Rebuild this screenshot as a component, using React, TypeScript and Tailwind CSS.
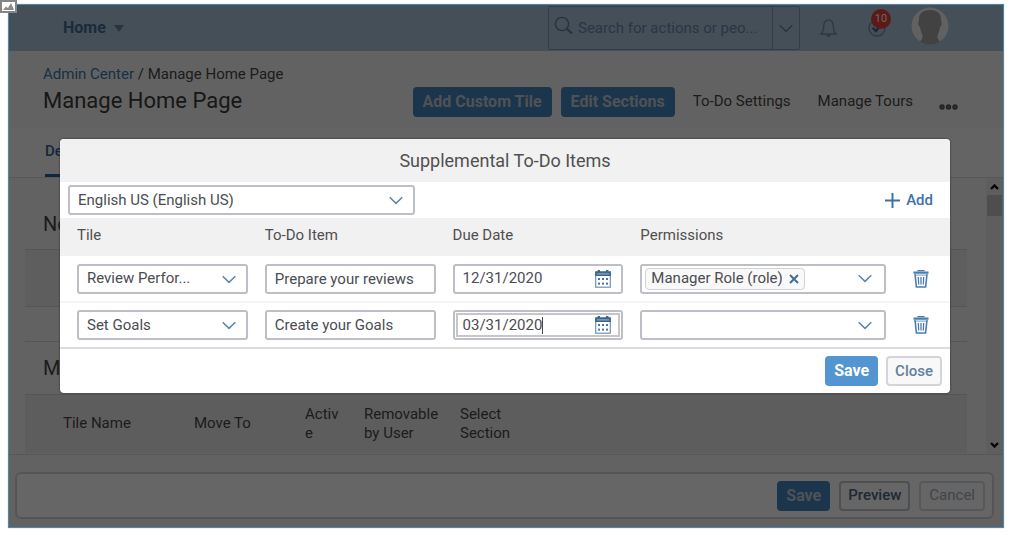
import { useState } from "react";
import type { ReactNode } from "react";

const font = "font-['Roboto','Liberation_Sans',sans-serif]";

function Chevron({ className = "" }: { className?: string }) {
  return (
    <svg className={className} width="14" height="9" viewBox="0 0 14 9" fill="none" stroke="currentColor" strokeWidth="1.5" aria-hidden="true">
      <path d="M0.7 1.2 L7 7.4 L13.3 1.2" />
    </svg>
  );
}

function CalendarIcon() {
  return (
    <svg width="16" height="18" viewBox="0 0 16 18" aria-hidden="true">
      <rect x="0.7" y="2" width="14.6" height="15.2" fill="#fff" stroke="#6f93b3" strokeWidth="1.2" />
      <rect x="0.2" y="1.4" width="15.6" height="4.6" fill="#3d6791" />
      <rect x="2.6" y="0" width="2.4" height="3" fill="#3d6791" />
      <rect x="11" y="0" width="2.4" height="3" fill="#3d6791" />
      <rect x="2" y="3.4" width="12" height="1" fill="#9ab6d0" />
      <g fill="#4a759e">
        <rect x="3" y="8" width="2" height="2" />
        <rect x="7" y="8" width="2" height="2" />
        <rect x="11" y="8" width="2" height="2" />
        <rect x="3" y="12.6" width="2" height="2" />
        <rect x="7" y="12.6" width="2" height="2" />
        <rect x="11" y="12.6" width="2" height="2" />
      </g>
    </svg>
  );
}

function TrashIcon() {
  return (
    <svg width="16" height="18" viewBox="0 0 16 18" fill="none" stroke="#4a7db2" aria-hidden="true">
      <path d="M0.5 2.6 H15.5" strokeWidth="2.4" />
      <path d="M5 1.2 V0.6 H11 V1.2" strokeWidth="1.2" />
      <path d="M2 4 L3.4 17 H12.6 L14 4" strokeWidth="1.6" />
      <path d="M3 5.2 H13" stroke="#8fb0d2" strokeWidth="1.2" />
      <path d="M5.3 7 L5.7 14.5 M8 7 V14.5 M10.7 7 L10.3 14.5" strokeWidth="1.3" />
    </svg>
  );
}

function SelectBox({ label, value }: { label: string; value: string }) {
  return (
    <div className="relative text-[#4a4d52]">
      <select
        aria-label={label}
        defaultValue={value}
        className="block h-[30px] w-full appearance-none rounded-[3px] border-2 border-[#bcc0c6] bg-white pr-8 pl-2 text-[15px]"
      >
        <option>{value}</option>
      </select>
      <Chevron className="pointer-events-none absolute top-[11px] right-3 text-[#5b86a8]" />
    </div>
  );
}

function DateBox({ label, value, active = false }: { label: string; value: string; active?: boolean }) {
  const [date, setDate] = useState(value);
  return (
    <div className="flex h-[30px] items-center rounded-[3px] border-2 border-[#bcc0c6] bg-white">
      <div className={active ? "relative m-px flex h-6 w-full items-center border-2 border-[#c6c6c8] pr-[7px] pl-[5px]" : "relative flex h-full w-full items-center pr-2.5 pl-2"}>
        <input
          aria-label={label}
          value={date}
          onChange={(e) => setDate(e.target.value)}
          className="w-full min-w-0 text-[15px] text-[#4a4d52] outline-none"
        />
        {active && <span className="absolute left-[84px] h-[17px] w-px bg-[#444]" />}
        <button type="button" aria-label="Open calendar" className="shrink-0">
          <CalendarIcon />
        </button>
      </div>
    </div>
  );
}

function Permissions({ label, role }: { label: string; role?: string }) {
  return (
    <div className="flex h-[30px] items-center rounded-[3px] border-2 border-[#bcc0c6] bg-white pr-3 pl-[3px]">
      {role && (
        <span className="flex h-[22px] shrink-0 items-center gap-1.5 rounded-[4px] border border-[#cfd2d6] bg-[#f9f9f9] px-[5px] text-[15px] text-[#4a4d52]">
          {role}
          <button type="button" aria-label={`Remove ${role}`} className="text-[#3f6d98]">
            <svg width="10" height="10" viewBox="0 0 10 10" stroke="currentColor" strokeWidth="2" aria-hidden="true">
              <path d="M1 1 L9 9 M9 1 L1 9" />
            </svg>
          </button>
        </span>
      )}
      <input aria-label={label} className="w-full min-w-0 outline-none" />
      <button type="button" aria-label="Show roles" className="shrink-0 text-[#5b86a8]">
        <Chevron />
      </button>
    </div>
  );
}

type Item = { tile: string; item: string; due: string; role?: string; active?: boolean };

const items: Item[] = [
  { tile: "Review Perfor...", item: "Prepare your reviews", due: "12/31/2020", role: "Manager Role (role)" },
  { tile: "Set Goals", item: "Create your Goals", due: "03/31/2020", active: true },
];

function Th({ children }: { children: ReactNode }) {
  return <th className="pb-[3px] pl-[17px] text-left font-normal">{children}</th>;
}

function Dialog() {
  return (
    <div role="dialog" aria-labelledby="dialog-title" className="w-full overflow-hidden rounded-[4px] bg-white shadow-[0_0_2px_#222]">
      <h2 id="dialog-title" className="bg-[#f1f1f1] text-center text-[18px] leading-[43px] font-normal text-[#505050]">
        Supplemental To-Do Items
      </h2>
      <div className="flex h-9 items-center justify-between pr-[17px] pl-2">
        <div className="w-[347px]">
          <SelectBox label="Language" value="English US (English US)" />
        </div>
        <button type="button" className="flex items-center gap-1.5 text-[15px] font-medium text-[#3f70a8]">
          <svg width="15" height="15" viewBox="0 0 15 15" stroke="currentColor" strokeWidth="2" aria-hidden="true">
            <path d="M7.5 0 V15 M0 7.5 H15" />
          </svg>
          Add
        </button>
      </div>
      <table className="w-full table-fixed text-[15px] text-[#4f4f4f]">
        <colgroup>
          <col className="w-[21.1%]" />
          <col className="w-[21.1%]" />
          <col className="w-[21.1%]" />
          <col className="w-[29.5%]" />
          <col />
        </colgroup>
        <thead>
          <tr className="h-[38px] bg-[#f1f1f1]">
            <Th>Tile</Th>
            <Th>To-Do Item</Th>
            <Th>Due Date</Th>
            <Th>Permissions</Th>
            <th aria-label="Actions" />
          </tr>
        </thead>
        <tbody>
          {items.map((row) => (
            <tr key={row.item} className="h-[46px] border-b-2 border-[#f4f4f4] last:border-[#dcdcdc]">
              <td className="pl-[17px]">
                <SelectBox label="Tile" value={row.tile} />
              </td>
              <td className="pl-[17px]">
                <input
                  aria-label="To-Do Item"
                  defaultValue={row.item}
                  className="block h-[30px] w-full rounded-[3px] border-2 border-[#bcc0c6] bg-white px-2 text-[#4a4d52]"
                />
              </td>
              <td className="pl-[17px]">
                <DateBox label="Due Date" value={row.due} active={row.active} />
              </td>
              <td className="pl-[17px]">
                <Permissions label="Permissions" role={row.role} />
              </td>
              <td className="pl-[27px]">
                <button type="button" aria-label="Delete" className="block">
                  <TrashIcon />
                </button>
              </td>
            </tr>
          ))}
        </tbody>
      </table>
      <div className="flex h-11 items-center justify-end gap-2 pr-2">
        <button type="button" className="h-[30px] rounded-[4px] bg-[#5295d0] px-[9px] text-base font-bold text-white">Save</button>
        <button type="button" className="h-[30px] rounded-[4px] border-2 border-[#d3d5d8] bg-[#f8f8f8] px-[7px] text-[15px] font-medium text-[#5f81a1]">Close</button>
      </div>
    </div>
  );
}

function ShellBar() {
  return (
    <header className="flex h-[46px] items-center bg-[#abc5dc] pr-[54px] pl-[54px] text-[15px]">
      <button type="button" className="flex items-center gap-2 text-base font-bold text-[#456d95]">
        Home
        <svg width="10" height="7" viewBox="0 0 10 7" fill="#6385a6" aria-hidden="true">
          <path d="M0 0 H10 L5 7 Z" />
        </svg>
      </button>
      <div className="ml-auto flex h-11 w-[252px] items-center rounded-[2px] border border-[#7b9dbd] pl-[5px] text-[#6589ac]">
        <svg className="mb-1 shrink-0" width="20" height="20" viewBox="0 0 20 20" fill="none" stroke="#5b7f9f" aria-hidden="true">
          <circle cx="8" cy="8" r="6.6" strokeWidth="1.4" />
          <path d="M13 13 L18 17.5" strokeWidth="2.2" />
        </svg>
        <input
          aria-label="Search"
          placeholder="Search for actions or peo..."
          className="ml-1 w-full min-w-0 outline-none placeholder:text-[#6589ac] placeholder:opacity-100"
        />
        <button type="button" aria-label="Search options" className="flex h-full w-[27px] shrink-0 items-center justify-center border-l border-[#7b9dbd]">
          <Chevron />
        </button>
      </div>
      <button type="button" aria-label="Notifications" className="ml-5">
        <svg width="17" height="18" viewBox="0 0 17 18" fill="none" stroke="#6b8dad" strokeWidth="1.3" aria-hidden="true">
          <path d="M1 15 C4 12 3.6 10 3.8 6.5 C4 3.4 6 1.2 8.5 1.2 S13 3.4 13.2 6.5 C13.4 10 13 12 16 15 Z" />
          <path d="M6.8 16 Q8.5 18 10.2 16" fill="#5b7f9f" />
        </svg>
      </button>
      <button type="button" aria-label="10 open tasks" className="relative ml-[31px]">
        <svg width="18" height="18" viewBox="0 0 18 18" fill="none" stroke="#6b90b4" aria-hidden="true">
          <circle cx="9" cy="9" r="8" strokeWidth="1.5" />
          <path d="M4.6 8.8 L8 12.2 L14 4.5" stroke="#3a628c" strokeWidth="2.2" />
        </svg>
        <span className="absolute -top-[10px] left-[3px] flex size-5 items-center justify-center rounded-full bg-[#e8403c] text-[11px] text-white">10</span>
      </button>
      <button type="button" aria-label="Profile" className="ml-[25px] pb-1">
        <svg width="38" height="38" viewBox="0 0 38 38" aria-hidden="true">
          <circle cx="19" cy="19" r="18.5" fill="#f2f2f2" />
          <path d="M19 3 C27 3 30.500 7 30 14 C31.500 15 30.500 19 29 20 C28.500 24 27 27 26.500 28.500 V31 L29 34.700 A18.500 18.500 0 0 1 9 34.700 L11.500 31 V28.500 C11 27 9.500 24 9 20 C7.500 19 6.500 15 8 14 C7.500 7 11 3 19 3 Z" fill="#a5a5a5" />
        </svg>
      </button>
    </header>
  );
}

function Page() {
  return (
    <div className="flex flex-1 flex-col bg-[#f6f6f6] text-[15px] text-[#484848]">
      <ShellBar />
      <div className="flex h-[77px] items-center pr-[45px] pl-[34px]">
        <div>
          <nav aria-label="Breadcrumb" className="leading-[22px]">
            <a href="#admin" className="text-[#3b78b0]">Admin Center</a> / <span>Manage Home Page</span>
          </nav>
          <h1 className="text-[22px] leading-8 text-[#3a3a3a]">Manage Home Page</h1>
        </div>
        <div className="ml-auto flex items-center pt-6">
          <button type="button" className="h-[30px] rounded-[4px] bg-[#4585bf] px-2.5 text-base font-bold text-[#c4ccd4]">Add Custom Tile</button>
          <button type="button" className="ml-[9px] h-[30px] rounded-[4px] bg-[#4585bf] px-2.5 text-base font-bold text-[#c4ccd4]">Edit Sections</button>
          <button type="button" className="ml-[18px]">To-Do Settings</button>
          <button type="button" className="ml-[27px]">Manage Tours</button>
          <button type="button" aria-label="More" className="ml-[26px] pt-2.5">
            <svg width="19" height="6" viewBox="0 0 19 6" fill="#777" stroke="#555" strokeWidth="1.4" aria-hidden="true">
              <circle cx="3" cy="3" r="2" />
              <circle cx="9.500" cy="3" r="2" />
              <circle cx="16" cy="3" r="2" />
            </svg>
          </button>
        </div>
      </div>
      <div role="tablist" className="flex h-[50px] items-stretch border-b border-[#ddd] bg-[#fafafa] pl-9">
        <button type="button" role="tab" aria-selected="true" className="border-b-[3px] border-[#2c62a0] font-medium text-[#36659a]">Default</button>
      </div>
      <div className="flex flex-1">
        <div className="flex-1 pr-[19px] pl-4">
          <h2 className="pt-[30px] pl-[18px] text-[20px] leading-8">No</h2>
          <div className="mt-[9px] h-[58px] border-y border-[#d4d4d4] bg-[#ebebeb]" />
          <div className="h-[35px] border-b border-[#d4d4d4]" />
          <h2 className="pt-[10px] pl-[18px] text-[20px] leading-8">My</h2>
          <table className="mt-[10px] w-full table-fixed border-t border-[#d4d4d4] bg-[#e8e8e8]">
            <colgroup>
              <col className="w-[160px]" />
              <col className="w-[111px]" />
              <col className="w-[59px]" />
              <col className="w-[96px]" />
              <col />
            </colgroup>
            <thead>
              <tr className="h-[58px] text-left leading-[19px]">
                <th className="pl-[38px] font-normal">Tile Name</th>
                <th className="pl-[9px] font-normal">Move To</th>
                <th className="pl-[9px] font-normal">Activ<br />e</th>
                <th className="pl-[9px] font-normal">Removable<br />by User</th>
                <th className="pl-[9px] font-normal">Select<br />Section</th>
              </tr>
            </thead>
          </table>
        </div>
        <div className="flex w-[17px] flex-col items-center justify-between bg-[#ececec] py-[6px] text-[#111]">
          <div className="flex w-full flex-col items-center gap-[5px]">
            <svg width="9" height="6" viewBox="0 0 9 6" fill="none" stroke="currentColor" strokeWidth="2.400" aria-hidden="true">
              <path d="M1 5 L4.500 1.500 L8 5" />
            </svg>
            <div className="h-[21px] w-[15px] bg-[#c4c4c4]" />
          </div>
          <svg width="9" height="6" viewBox="0 0 9 6" fill="none" stroke="currentColor" strokeWidth="2.400" aria-hidden="true">
            <path d="M1 1 L4.500 4.500 L8 1" />
          </svg>
        </div>
      </div>
      <footer className="border-t border-[#d9d9d9] pt-[17px] pr-[9px] pb-2 pl-1.5">
        <div className="flex h-[47px] items-center justify-end gap-[9px] rounded-[6px] border-2 border-[#d4d4d4] bg-[#fefefe] pr-[7px]">
          <button type="button" className="h-[30px] rounded-[4px] bg-[#4585bf] px-[9px] text-base font-bold text-[#c4ccd4]">Save</button>
          <button type="button" className="h-[30px] rounded-[4px] border-2 border-[#c2c5c9] px-[7px] font-medium text-[#4d6885]">Preview</button>
          <button type="button" disabled className="h-[30px] rounded-[4px] border-2 border-[#dadde0] px-2 text-[#a2aebb]">Cancel</button>
        </div>
      </footer>
    </div>
  );
}

export default function App() {
  return (
    <div className={`relative flex min-h-screen flex-col bg-white pt-1 pr-[9px] pb-2 pl-2 ${font}`}>
      <div className="relative flex flex-1 flex-col border border-[#4f87a8] shadow-[0_0_1px_#8fbcd4]">
        <Page />
        <div className="absolute inset-0 flex items-start bg-black/60 pt-[134px] pr-[53px] pl-[51px]">
          <Dialog />
        </div>
      </div>
      <svg className="absolute top-0 left-0" width="17" height="13" viewBox="0 0 17 13" aria-hidden="true">
        <rect x="1" y="1" width="15" height="11" fill="#fff" stroke="#858585" strokeWidth="2" />
        <path d="M3 10 L6 6.500 L8 8 L11 3 L14 10 Z" fill="#8a8a8a" />
      </svg>
    </div>
  );
}
